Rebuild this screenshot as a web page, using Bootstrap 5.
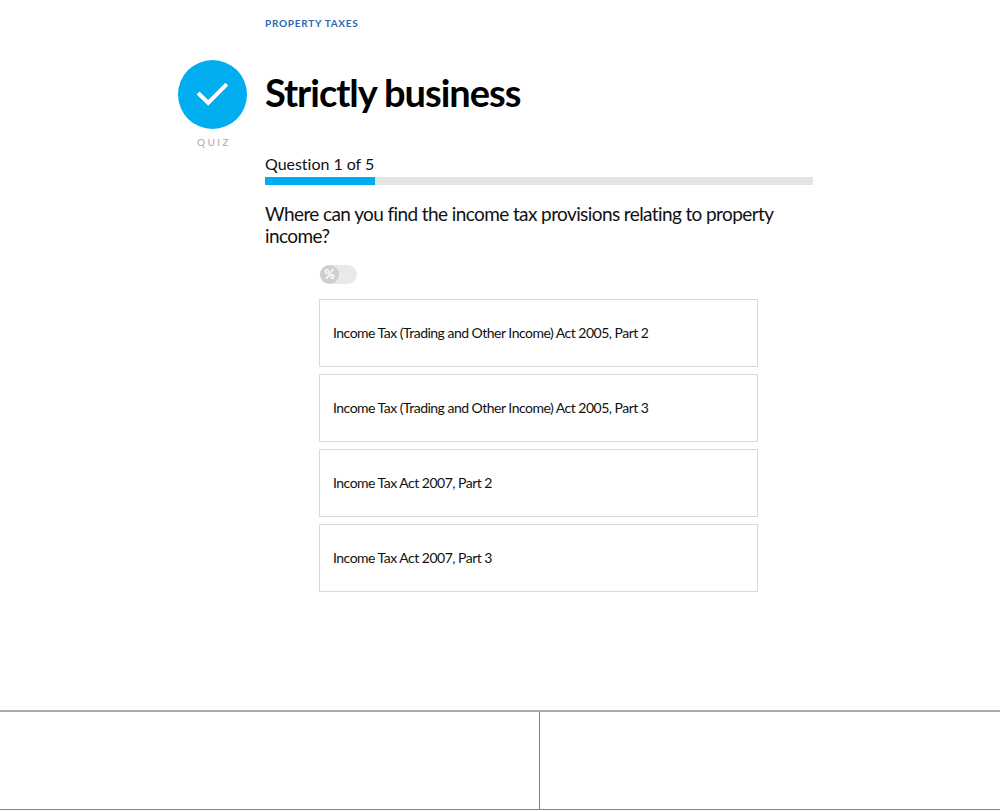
<!DOCTYPE html>
<html lang="en">
<head>
  <meta charset="UTF-8" />
  <meta name="viewport" content="width=device-width, initial-scale=1" />
  <title>Strictly business</title>
  <link href="https://cdn.jsdelivr.net/npm/bootstrap@5.3.0/dist/css/bootstrap.min.css" rel="stylesheet" />
  <style>
    body {
      font-family: Lato, "Open Sans", sans-serif;
      font-variant-ligatures: none;
      color: #111;
      background: #fff;
      height: 810px;
      overflow: hidden;
    }
    .quiz-page {
      height: 710px;
      padding-left: 178px;
    }
    .quiz-side {
      width: 69px;
      margin-right: 18px;
      padding-top: 60px;
    }
    .quiz-icon {
      width: 69px;
      height: 69px;
      display: block;
    }
    .quiz-label {
      font-size: 10px;
      line-height: 12px;
      letter-spacing: 2.4px;
      margin-top: 7px;
      padding-left: 3px;
      color: #aaa;
    }
    .quiz-main {
      width: 548px;
      padding-top: 16px;
    }
    .topic-link {
      font-size: 10px;
      line-height: 14px;
      letter-spacing: 0.74px;
      color: #2a68b0;
    }
    .quiz-title {
      font-size: 38px;
      line-height: 46px;
      letter-spacing: -1.02px;
      margin-top: 39px;
      color: #000;
    }
    .quiz-count {
      font-size: 16px;
      line-height: 20px;
      letter-spacing: -0.03px;
      margin-top: 39px;
    }
    .quiz-progress {
      height: 8px;
      margin-top: 3px;
      background: #e4e4e4;
    }
    .quiz-progress .progress-bar {
      background: #00adef;
    }
    .quiz-question {
      font-size: 19px;
      line-height: 22px;
      letter-spacing: -0.6px;
      padding-right: 30px;
      margin-top: 18px;
    }
    .answers {
      width: 439px;
      margin-left: 54px;
    }
    .percent-toggle {
      width: 37px;
      height: 19px;
      margin-top: 18px;
      margin-left: 1px;
      background: #e9e9e9;
    }
    .percent-knob {
      width: 19px;
      height: 19px;
      font-size: 13px;
      line-height: 18px;
      background: #cfcfcf;
    }
    .answer-list {
      gap: 7px;
      margin-top: 15px;
    }
    .answer {
      height: 68px;
      padding: 0 13px 2px;
      border: 1px solid #d9d9d9;
      font-size: 14px;
      letter-spacing: -0.51px;
      background: #fff;
    }
    .quiz-footer {
      height: 100px;
      border-top: 2px solid #a9a9a9;
      border-bottom: 1px solid #7f7f86;
    }
    .footer-prev {
      width: 540px;
      border-right: 1px solid #808080;
    }
  </style>
</head>
<body>
  <div class="quiz-page d-flex">
    <div class="quiz-side">
      <svg class="quiz-icon" viewBox="0 0 69 69">
        <circle cx="34.5" cy="34.5" r="34.5" fill="#00adef" />
        <path d="M20.1 33 L30.2 43 L48.8 24.2" fill="none" stroke="#fff" stroke-width="4" />
      </svg>
      <div class="quiz-label text-center">QUIZ</div>
    </div>

    <div class="quiz-main">
      <a href="#" class="topic-link fw-bold d-block text-decoration-none">PROPERTY TAXES</a>
      <h1 class="quiz-title fw-bold mb-0">Strictly business</h1>

      <div class="quiz-count">Question 1 of 5</div>
      <div class="quiz-progress progress rounded-0">
        <div class="progress-bar" style="width: 20%"></div>
      </div>

      <p class="quiz-question mb-0">Where can you find the income tax provisions relating to property income?</p>

      <div class="answers">
        <div class="percent-toggle rounded-pill">
          <div class="percent-knob rounded-circle text-center text-white fw-bold">%</div>
        </div>
        <div class="answer-list d-flex flex-column">
          <div class="answer d-flex align-items-center">Income Tax (Trading and Other Income) Act 2005, Part 2</div>
          <div class="answer d-flex align-items-center">Income Tax (Trading and Other Income) Act 2005, Part 3</div>
          <div class="answer d-flex align-items-center">Income Tax Act 2007, Part 2</div>
          <div class="answer d-flex align-items-center">Income Tax Act 2007, Part 3</div>
        </div>
      </div>
    </div>
  </div>

  <div class="quiz-footer d-flex">
    <div class="footer-prev"></div>
    <div class="flex-grow-1"></div>
  </div>

  <script src="https://cdn.jsdelivr.net/npm/bootstrap@5.3.0/dist/js/bootstrap.bundle.min.js"></script>
</body>
</html>
